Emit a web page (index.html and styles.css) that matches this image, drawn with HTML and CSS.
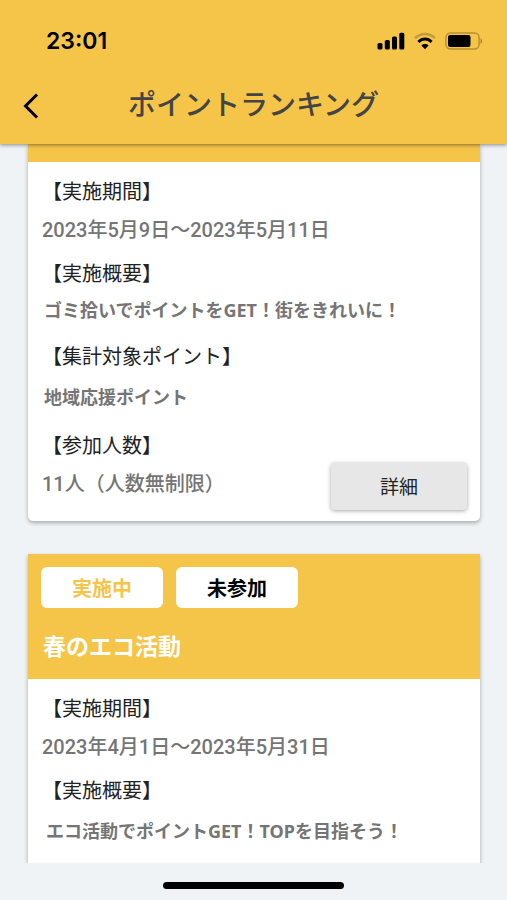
FILE: index.html
```html
<!DOCTYPE html>
<html lang="ja">
<head>
<meta charset="utf-8">
<meta name="viewport" content="width=device-width, initial-scale=1">
<title>ポイントランキング</title>
<link rel="stylesheet" href="styles.css">
</head>
<body>
<header class="app-header">
  <div class="status-bar">
    <time class="clock">23:01</time>
    <div class="status-icons">
      <svg width="28" height="18" viewBox="0 0 28 18" aria-hidden="true">
        <rect x="0.5" y="11" width="5" height="6.5" rx="1.5"/>
        <rect x="7.8" y="8" width="5" height="9.5" rx="1.5"/>
        <rect x="15" y="4.5" width="5" height="13" rx="1.5"/>
        <rect x="22.3" y="0.8" width="5" height="16.7" rx="1.5"/>
      </svg>
      <svg width="22" height="18" viewBox="0 0 22 18" aria-hidden="true">
        <path d="M1 6.2C6.4.6 15.6.6 21 6.2" fill="none" stroke="#c39b38" stroke-width="2.6"/>
        <path d="M4.4 10C8.2 6.1 13.8 6.1 17.6 10" fill="none" stroke="#000" stroke-width="3"/>
        <path d="M7.4 13.4C9.4 11.6 12.6 11.6 14.6 13.4L11 17.2Z"/>
      </svg>
      <svg width="38" height="18" viewBox="0 0 38 18" aria-hidden="true">
        <rect x="0.9" y="0.9" width="33.2" height="16.2" rx="4.8" fill="none" stroke="#b98f30" stroke-width="1.5"/>
        <rect x="3" y="3" width="22.5" height="12" rx="2.2"/>
        <path d="M35.6 6.2C37.5 7 37.5 11 35.6 11.8Z" fill="#a37c26"/>
      </svg>
    </div>
  </div>
  <div class="title-bar">
    <button class="back" type="button" aria-label="戻る">
      <svg width="16" height="26" viewBox="0 0 16 26" aria-hidden="true">
        <path d="M14 1.5 2.5 13 14 24.5" fill="none" stroke="#000" stroke-width="3"/>
      </svg>
    </button>
    <h1>ポイントランキング</h1>
  </div>
</header>

<main class="list">
  <article class="card">
    <div class="card-head card-head--scrolled"></div>
    <div class="card-body">
      <h3>【実施期間】</h3>
      <p class="value">2023年5月9日〜2023年5月11日</p>
      <h3>【実施概要】</h3>
      <p class="note note--close">ゴミ拾いでポイントをGET！街をきれいに！</p>
      <h3>【集計対象ポイント】</h3>
      <p class="note">地域応援ポイント</p>
      <div class="card-foot">
        <div>
          <h3>【参加人数】</h3>
          <p class="value value--last">11人（人数無制限）</p>
        </div>
        <button class="detail" type="button">詳細</button>
      </div>
    </div>
  </article>

  <article class="card">
    <div class="card-head">
      <div class="badges">
        <span class="badge badge--active">実施中</span>
        <span class="badge">未参加</span>
      </div>
      <h2>春のエコ活動</h2>
    </div>
    <div class="card-body">
      <h3>【実施期間】</h3>
      <p class="value">2023年4月1日〜2023年5月31日</p>
      <h3>【実施概要】</h3>
      <p class="note note--indent">エコ活動でポイントGET！TOPを目指そう！</p>
    </div>
  </article>
</main>

<footer class="home-area"><div class="home-indicator"></div></footer>
</body>
</html>
```
FILE: styles.css
```css
* { box-sizing: border-box; }

body {
  margin: 0;
  height: 100vh;
  display: flex;
  flex-direction: column;
  overflow: hidden;
  background: #eff3f6;
  color: #222;
  font-family: Roboto, "Noto Sans CJK JP", sans-serif;
}

h1, h2, h3, p { margin: 0; }

button {
  border: 0;
  padding: 0;
  color: inherit;
  font-family: inherit;
}

/* Header */
.app-header {
  position: relative;
  z-index: 1;
  flex: none;
  padding-bottom: 14px;
  background: #f5c54a;
  box-shadow: 0 1px 4px rgba(0, 0, 0, 0.45);
}

.status-bar {
  display: flex;
  align-items: center;
  justify-content: space-between;
  height: 82px;
  padding: 0 24px 0 46px;
}

.clock {
  color: #000;
  font: 600 23px/28px Inter, sans-serif;
}

.status-icons {
  display: flex;
  gap: 9px;
}

.title-bar {
  display: grid;
  grid-template-columns: 48px 1fr 48px;
  align-items: center;
  height: 48px;
}

.back {
  display: flex;
  align-items: center;
  justify-content: flex-end;
  width: 39px;
  height: 48px;
  background: none;
}

h1 {
  color: #444;
  font-size: 28px;
  line-height: 40px;
  font-weight: 500;
  text-align: center;
}

/* Cards */
.list {
  flex: 1;
  min-height: 0;
  overflow: hidden;
  padding: 0 27px 0 28px;
}

.card {
  margin-bottom: 33px;
  background: #fff;
  border-radius: 0 0 5px 5px;
  box-shadow: 0 2px 4px rgba(0, 0, 0, 0.3);
}

.card-head {
  padding: 13px 13px 15px;
  background: #f5c54a;
}

.card-head--scrolled {
  height: 18px;
  padding: 0;
}

.badges {
  display: flex;
  gap: 13px;
  margin-bottom: 24px;
}

.badge {
  width: 122px;
  padding-top: 3px;
  border-radius: 6px;
  background: #fff;
  color: #000;
  font-size: 20px;
  line-height: 38px;
  font-weight: 700;
  text-align: center;
}

.badge--active { color: #f5c54a; }

h2 {
  padding-left: 2px;
  color: #fff;
  font-size: 23px;
  line-height: 32px;
  font-weight: 700;
}

.card-body { padding: 16px 13px 11px 14px; }

h3 {
  font-size: 20px;
  line-height: 28px;
  font-weight: 400;
}

.value {
  margin: 10px 0 16px;
  color: #757575;
  font-size: 20px;
  line-height: 28px;
  font-weight: 500;
}

.value--last { margin-bottom: 12px; }

.note {
  margin: 12px 0 21px;
  padding-left: 2px;
  color: #757575;
  font-family: "Noto Sans", "Noto Sans CJK JP", sans-serif;
  font-size: 18px;
  line-height: 28px;
  font-weight: 700;
}

.note--close { margin: 8px 0 19px; }

.note--indent { padding-left: 4px; }

.card-foot {
  display: flex;
  align-items: flex-end;
  justify-content: space-between;
}

.detail {
  width: 136px;
  height: 47px;
  padding-bottom: 3px;
  border-radius: 4px;
  background: #e7e7e7;
  box-shadow: 0 1px 4px rgba(0, 0, 0, 0.35);
  font-size: 19px;
}

/* Home indicator */
.home-area {
  position: relative;
  z-index: 1;
  display: flex;
  flex: none;
  align-items: center;
  justify-content: center;
  height: 37px;
  padding-top: 8px;
  background: #eff3f6;
}

.home-indicator {
  width: 181px;
  height: 7px;
  border-radius: 4px;
  background: #000;
}
```
